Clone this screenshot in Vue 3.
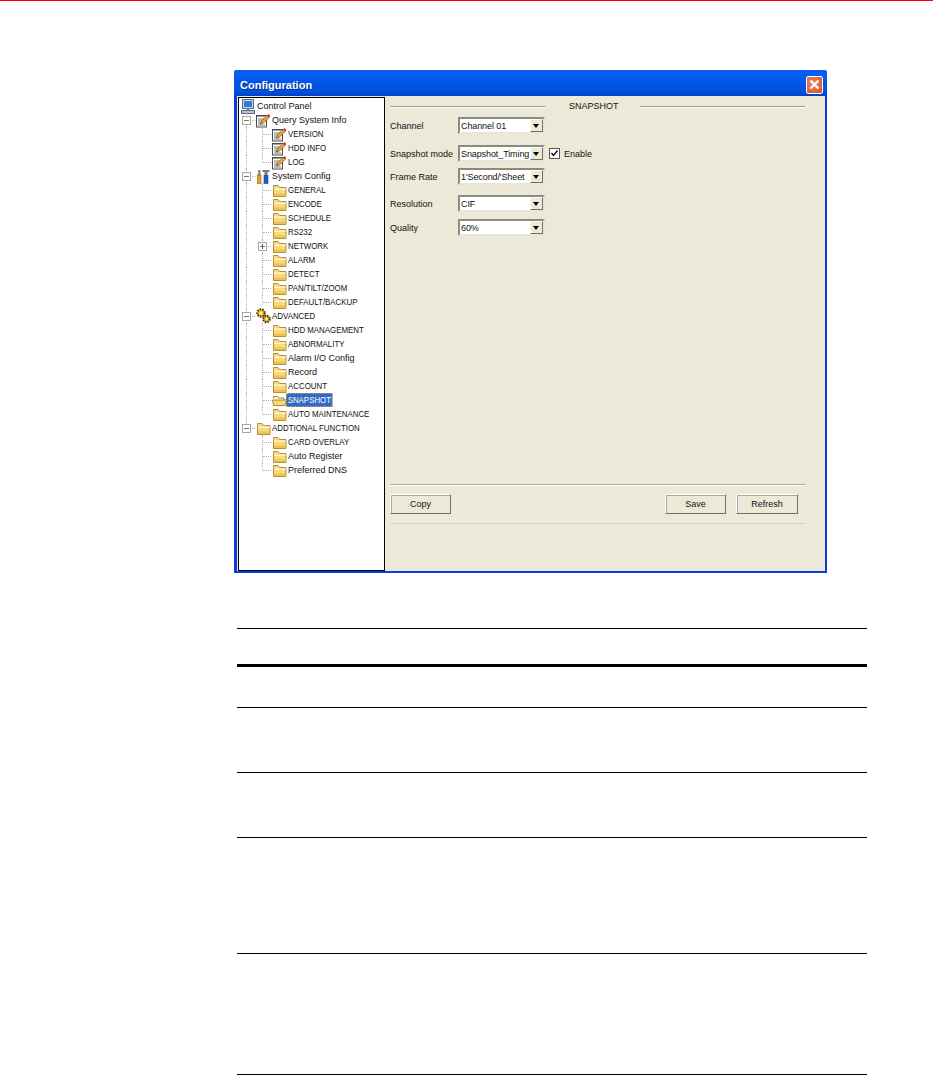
<script setup>
const groups = [
  { label: 'Query System Info', icon: 'note', kids: [
    { label: 'VERSION', icon: 'note' }, { label: 'HDD INFO', icon: 'note' }, { label: 'LOG', icon: 'note' } ] },
  { label: 'System Config', icon: 'tools', kids: [
    { label: 'GENERAL' }, { label: 'ENCODE' }, { label: 'SCHEDULE' }, { label: 'RS232' },
    { label: 'NETWORK', plus: true }, { label: 'ALARM' }, { label: 'DETECT' },
    { label: 'PAN/TILT/ZOOM' }, { label: 'DEFAULT/BACKUP' } ] },
  { label: 'ADVANCED', icon: 'gears', kids: [
    { label: 'HDD MANAGEMENT' }, { label: 'ABNORMALITY' }, { label: 'Alarm I/O Config' }, { label: 'Record' },
    { label: 'ACCOUNT' }, { label: 'SNAPSHOT', icon: 'open', selected: true }, { label: 'AUTO MAINTENANCE' } ] },
  { label: 'ADDTIONAL FUNCTION', icon: 'folder', kids: [
    { label: 'CARD OVERLAY' }, { label: 'Auto Register' }, { label: 'Preferred DNS' } ] },
]

const isCaps = (s) => s === s.toUpperCase()

const rows = [{ label: 'Control Panel', icon: 'pc', cells: [] }]
groups.forEach((g, gi) => {
  const lastG = gi === groups.length - 1
  rows.push({ label: g.label, icon: g.icon, cells: [{ type: lastG ? 'l' : 't', box: 'minus' }] })
  g.kids.forEach((k, ki) => {
    rows.push({
      label: k.label,
      icon: k.icon || 'folder',
      selected: k.selected,
      cells: [
        { type: lastG ? 'none' : 'v' },
        { type: ki === g.kids.length - 1 ? 'l' : 't', box: k.plus ? 'plus' : '' },
      ],
    })
  })
})

const fields = [
  { label: 'Channel', value: 'Channel 01', cls: 'f1' },
  { label: 'Snapshot mode', value: 'Snapshot_Timing', cls: 'f2', check: true },
  { label: 'Frame Rate', value: "1'Second/'Sheet", cls: 'f3' },
  { label: 'Resolution', value: 'CIF', cls: 'f4' },
  { label: 'Quality', value: '60%', cls: 'f5' },
]

const tableRows = [36, 43, 65, 65, 116, 121, 1]
</script>

<template>
  <div class="page">
    <div class="window">
      <div class="titlebar">
        <span class="title">Configuration</span>
        <span class="close">
          <svg width="11" height="11" viewBox="0 0 11 11"><path d="M1.5 1.5l8 8M9.5 1.5l-8 8" stroke="#fff" stroke-width="2.2" fill="none"/></svg>
        </span>
      </div>
      <div class="body">
        <div class="tree">
          <div v-for="r in rows" :key="r.label" class="node" :class="{ root: !r.cells.length }">
            <span v-for="(c, i) in r.cells" :key="i" class="cell" :class="c.type">
              <span v-if="c.box" class="box" :class="c.box"></span>
            </span>
            <span class="ico">
              <svg v-if="r.icon === 'folder'" width="15" height="13" viewBox="0 0 15 13">
                <path d="M1.500 3.500V1.500h4.500l1.500 2h6.500v9h-12.500z" fill="#f9d97e" stroke="#b0923c"/>
                <path d="M2 4.500h11.500v1.500H2z" fill="#fff3c4"/>
                <path d="M2 9.500h11.500V12H2z" fill="#efc052"/>
              </svg>
              <svg v-else-if="r.icon === 'open'" width="15" height="13" viewBox="0 0 15 13">
                <path d="M1.500 4.500V2.500h4l1 1.500h5.500v2" fill="#fff3c4" stroke="#a98a2f"/>
                <path d="M1.500 11.500l-1-5.500h11l3 0-1.500 5.500z" fill="#f9d97e" stroke="#a98a2f"/>
              </svg>
              <svg v-else-if="r.icon === 'note'" width="14" height="15" viewBox="0 0 14 15">
                <rect x="0.500" y="2.500" width="10" height="11.500" fill="#fff" stroke="#4a4a4a"/>
                <path d="M2 2v2M4 2v2M6 2v2M8 2v2" stroke="#4a4a4a"/>
                <path d="M2 6h7M2 8h5M2 10h4M2 12h7" stroke="#777"/>
                <path d="M4.500 11l1-3L11 2.500l2 2L7.500 10z" fill="#f4ac32" stroke="#6a3f0c" stroke-width=".7"/>
                <path d="M11 2.500l1.500-1.500 2 2L13 4.500z" fill="#d8262c"/>
              </svg>
              <svg v-else-if="r.icon === 'tools'" width="14" height="15" viewBox="0 0 14 15">
                <path d="M2 1h2.500v5H2z" fill="#8f8f8f"/>
                <rect x="1.500" y="6" width="3.500" height="8.500" fill="#eda41c" stroke="#8a5a10" stroke-width=".6"/>
                <path d="M6.500 1h7v2h-2v3.500h-3V3h-2z" fill="#727a86"/>
                <rect x="8" y="6.500" width="4" height="8" fill="#1a62c2" stroke="#123e7d" stroke-width=".6"/>
              </svg>
              <svg v-else-if="r.icon === 'gears'" width="15" height="16" viewBox="0 0 15 16">
                <circle cx="5" cy="5" r="3.700" fill="#f2c22e" stroke="#4a3a0c" stroke-width="2" stroke-dasharray="1.600 1"/>
                <circle cx="5" cy="5" r="1.300" fill="#fff4b0"/>
                <circle cx="10.500" cy="11" r="3.300" fill="#eab020" stroke="#4a3a0c" stroke-width="2" stroke-dasharray="1.600 1"/>
                <circle cx="10.500" cy="11" r="1.200" fill="#fff4b0"/>
              </svg>
              <svg v-else width="14" height="15" viewBox="0 0 14 15">
                <rect x="1.500" y="0.500" width="11" height="9" fill="#c9d3e6" stroke="#5c6b85"/>
                <rect x="3" y="2" width="8" height="6" fill="#2f7de0"/>
                <rect x="5.500" y="10" width="3" height="1.500" fill="#8d95a5"/>
                <rect x="0.500" y="11.500" width="13" height="3" fill="#b7c0d0" stroke="#5c6b85"/>
              </svg>
            </span>
            <span class="name" :class="{ sel: r.selected, caps: isCaps(r.label) }">{{ r.label }}</span>
          </div>
        </div>

        <div class="pane">
          <div class="legend">
            <span class="rule first"></span>
            <span class="legend-text">SNAPSHOT</span>
            <span class="rule second"></span>
          </div>
          <div class="form">
            <div v-for="f in fields" :key="f.label" class="field" :class="f.cls">
              <span class="flabel">{{ f.label }}</span>
              <span class="select">
                <span class="value">{{ f.value }}</span>
                <span class="arrow"></span>
              </span>
              <template v-if="f.check">
                <span class="check">
                  <svg width="9" height="9" viewBox="0 0 9 9"><path d="M1.500 4l2 2.500L7.500 1.500" stroke="#000" stroke-width="1.300" fill="none"/></svg>
                </span>
                <span class="check-label">Enable</span>
              </template>
            </div>
          </div>
          <div class="footer">
            <div class="sep"></div>
            <div class="buttons">
              <button class="btn">Copy</button>
              <span class="spacer"></span>
              <button class="btn">Save</button>
              <button class="btn">Refresh</button>
            </div>
            <div class="sep soft"></div>
          </div>
        </div>
      </div>
    </div>

    <div class="table">
      <div v-for="(h, i) in tableRows" :key="i" class="trow" :class="{ heavy: i === 1 }" :style="{ height: h + 'px' }"></div>
    </div>
  </div>
</template>

<style>
html, body { margin: 0; background: #fff; overflow: hidden; }
</style>

<style scoped>
.page {
  width: 933px;
  height: 1075px;
  box-sizing: border-box;
  border-top: 1px solid #ff0000;
  padding-top: 69px;
  background: #fff;
  font-family: "Liberation Sans", Arial, sans-serif;
  font-size: 9px;
  color: #111;
  overflow: hidden;
}
.window {
  box-sizing: border-box;
  width: 593px;
  height: 503px;
  margin-left: 234px;
  background: #ece9d8;
  border-left: 3px solid #0b3be0;
  border-right: 2px solid #0b3be0;
  border-bottom: 2px solid #0b3be0;
  border-radius: 3px 3px 0 0;
}
.titlebar {
  height: 26px;
  margin: 0 -2px 0 -3px;
  padding: 3px 4px 0 6px;
  box-sizing: border-box;
  display: flex;
  align-items: center;
  justify-content: space-between;
  background: linear-gradient(#0a5ae6 0%, #0660f8 12%, #0056e4 50%, #0053e0 80%, #0040c8 100%);
  border-radius: 3px 3px 0 0;
}
.title {
  color: #fff;
  font-size: 11px;
  font-weight: 700;
  text-shadow: 1px 1px 0 #0a2f9c;
}
.close {
  box-sizing: border-box;
  width: 17px;
  height: 18px;
  display: flex;
  align-items: center;
  justify-content: center;
  background: radial-gradient(circle at 40% 40%, #e88a6c, #d4502c);
  border: 1px solid #fff;
  border-radius: 2px;
}
.body {
  display: flex;
  height: 475px;
  padding-left: 1px;
}
.tree {
  box-sizing: border-box;
  width: 147px;
  height: 474px;
  margin-top: 1px;
  padding-top: 1px;
  background: #fff;
  border: 1px solid #000;
  flex: none;
}
.node {
  display: flex;
  align-items: center;
  height: 14px;
  white-space: nowrap;
}
.node.root { padding-left: 1px; }
.cell {
  position: relative;
  width: 16px;
  height: 14px;
  flex: none;
}
.cell.v::before,
.cell.t::before,
.cell.l::before {
  content: "";
  position: absolute;
  left: 7px;
  top: 0;
  bottom: 0;
  border-left: 1px dotted #b4b4b4;
}
.cell.l::before { bottom: 7px; }
.cell.t::after,
.cell.l::after {
  content: "";
  position: absolute;
  left: 8px;
  width: 8px;
  top: 7px;
  border-top: 1px dotted #b4b4b4;
}
.box {
  position: absolute;
  z-index: 1;
  left: 3px;
  top: 3px;
  box-sizing: border-box;
  width: 9px;
  height: 9px;
  background: #fff;
  border: 1px solid #a8a898;
}
.box::before {
  content: "";
  position: absolute;
  left: 1px;
  top: 3px;
  width: 5px;
  height: 1px;
  background: #777;
}
.box.plus::after {
  content: "";
  position: absolute;
  left: 3px;
  top: 1px;
  width: 1px;
  height: 5px;
  background: #555;
}
.ico {
  width: 16px;
  height: 14px;
  margin-left: 1px;
  display: flex;
  align-items: center;
  flex: none;
}
.name { line-height: 14px; }
.name.caps {
  display: inline-block;
  font-size: 9.500px;
  transform: scaleX(.83);
  transform-origin: left center;
}
.name.sel {
  margin-left: -2px;
  padding: 0 2px;
  color: #fff;
  background: #316ac5;
  outline: 1px dotted #e0b040;
  outline-offset: -1px;
}
.pane {
  flex: 1;
  padding-left: 5px;
}
.legend {
  display: flex;
  align-items: center;
  width: 415px;
  height: 12px;
  margin-top: 4px;
}
.rule {
  height: 1px;
  background: #9c9a8c;
  box-shadow: 0 1px 0 #fff;
}
.rule.first { width: 155px; }
.legend-text { margin-left: 24px; width: 71px; }
.rule.second { flex: 1; }
.form { margin-top: 5px; }
.field {
  display: flex;
  align-items: center;
  height: 17px;
}
.f2 { margin-top: 11px; }
.f3 { margin-top: 6px; }
.f4 { margin-top: 10px; }
.f5 { margin-top: 7px; }
.flabel { width: 68px; flex: none; }
.select {
  box-sizing: border-box;
  width: 87px;
  height: 17px;
  display: flex;
  align-items: center;
  justify-content: space-between;
  flex: none;
  background: #fff;
  border: 2px solid;
  border-color: #8c8a7c #e8e6d8 #e8e6d8 #8c8a7c;
  padding-left: 1px;
}
.value { white-space: nowrap; letter-spacing: -.1px; }
.arrow {
  position: relative;
  box-sizing: border-box;
  width: 13px;
  height: 13px;
  flex: none;
  background: #ece9d8;
  border: 1px solid;
  border-color: #fff #716f64 #716f64 #fff;
}
.arrow::after {
  content: "";
  position: absolute;
  left: 2px;
  top: 4px;
  border-top: 4px solid #000;
  border-left: 3.500px solid transparent;
  border-right: 3.500px solid transparent;
}
.check {
  box-sizing: border-box;
  width: 11px;
  height: 11px;
  margin-left: 4px;
  display: flex;
  align-items: center;
  justify-content: center;
  background: #fff;
  border: 1px solid #555;
  flex: none;
}
.check-label { margin-left: 4px; }
.footer { margin-top: 248px; width: 415px; }
.sep {
  height: 1px;
  background: #aca899;
  box-shadow: 0 1px 0 #fff;
}
.sep.soft { background: #d6d3c4; box-shadow: none; margin-top: 9px; }
.buttons {
  display: flex;
  gap: 10px;
  margin-top: 9px;
  padding-right: 7px;
}
.spacer { flex: 1; }
.btn {
  box-sizing: border-box;
  width: 61px;
  height: 20px;
  padding: 0;
  font: inherit;
  color: #111;
  background: #ece9d8;
  border: 1px solid;
  border-color: #fff #716f64 #716f64 #fff;
  box-shadow: 1px 1px 0 #aca899 inset;
}
.btn:last-child { width: 62px; }
.table {
  width: 630px;
  margin: 55px 0 0 237px;
}
.trow {
  box-sizing: border-box;
  border-top: 1px solid #000;
}
.trow.heavy { border-top-width: 3px; }
</style>
